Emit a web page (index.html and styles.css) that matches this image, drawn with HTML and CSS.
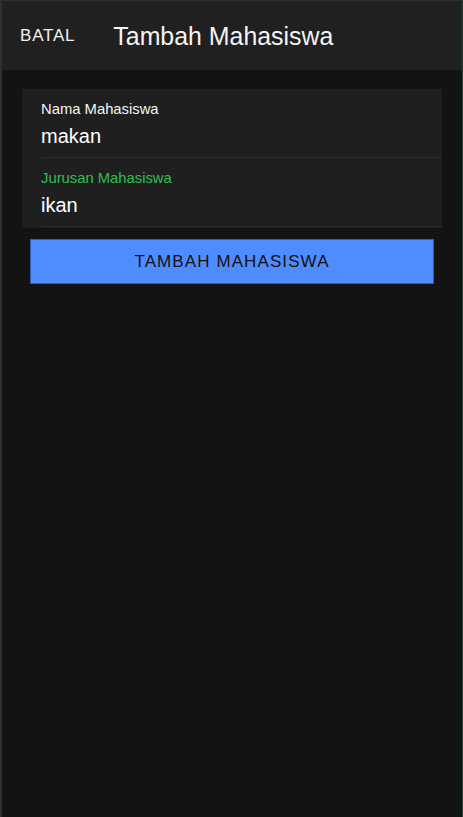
FILE: index.html
```html
<!DOCTYPE html>
<html lang="id">
<head>
<meta charset="utf-8">
<title>Tambah Mahasiswa</title>
<link rel="stylesheet" href="styles.css">
</head>
<body>
<div class="frame">
  <header class="toolbar">
    <span class="cancel">BATAL</span>
    <h1 class="title">Tambah Mahasiswa</h1>
  </header>
  <main class="content">
    <div class="card">
      <div class="field">
        <div class="label">Nama Mahasiswa</div>
        <div class="value">makan</div>
      </div>
      <div class="field">
        <div class="label label-focus">Jurusan Mahasiswa</div>
        <div class="value">ikan</div>
      </div>
    </div>
    <button class="submit" type="button">TAMBAH MAHASISWA</button>
  </main>
</div>
</body>
</html>
```

FILE: styles.css
```css
html, body {
  margin: 0;
  padding: 0;
  height: 100%;
  background: #131313;
  font-family: "Liberation Sans", Arial, sans-serif;
}

.frame {
  box-sizing: border-box;
  min-height: 100vh;
  border-top: 1px solid #2a3132;
  border-left: 2px solid #2b3032;
  border-right: 1px solid #2a3c3e;
  background: #131313;
}

.toolbar {
  height: 69px;
  background: #202020;
  display: flex;
  align-items: center;
  padding-left: 18px;
  gap: 38px;
}

.cancel {
  color: #f2f2f2;
  font-size: 17px;
  line-height: 20px;
  letter-spacing: 0.8px;
}

.title {
  margin: 0;
  color: #f4f4f4;
  font-weight: normal;
  font-size: 24.9px;
  line-height: 30px;
}

.content {
  padding: 19px 20px 0 20px;
}

.card {
  background: #1f1f1f;
  padding-bottom: 1px;
}

.field {
  margin-left: 19px;
  padding: 12px 0 9px 0;
  border-bottom: 1px solid #2c2c2c;
}

.label {
  color: #f5f5f5;
  font-size: 14.8px;
  line-height: 17px;
}

.label-focus {
  color: #2fbf50;
}

.value {
  margin-top: 6px;
  color: #ffffff;
  font-size: 20px;
  line-height: 24px;
}

.submit {
  display: block;
  box-sizing: border-box;
  width: calc(100% - 16px);
  margin: 11px 8px 0 8px;
  height: 45px;
  background: #4f8cff;
  border: 1px solid #2d5fb5;
  color: #111111;
  font-family: "Liberation Sans", Arial, sans-serif;
  font-size: 17px;
  letter-spacing: 1.1px;
  padding: 0;
  cursor: pointer;
}
```
